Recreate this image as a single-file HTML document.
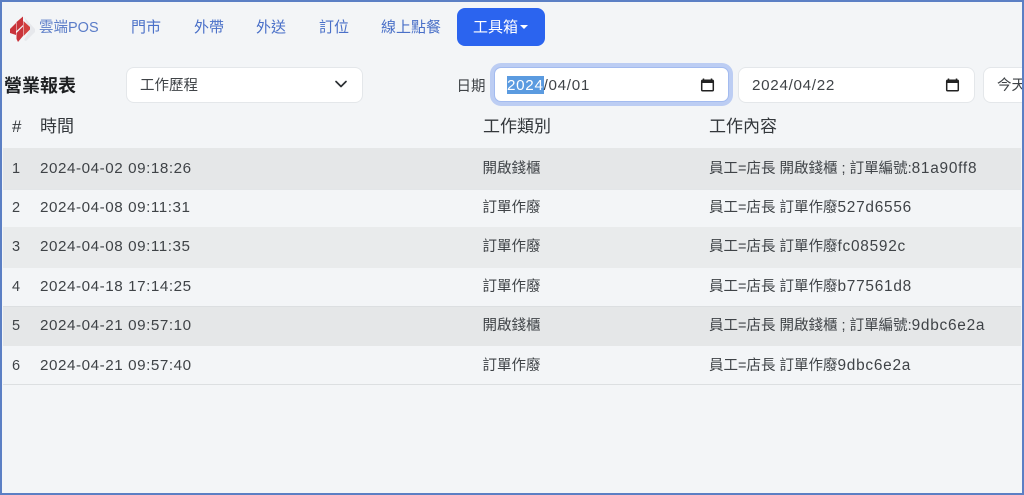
<!DOCTYPE html>
<html><head><meta charset="utf-8">
<style>
html,body{margin:0;padding:0;width:1024px;height:495px;overflow:hidden;background:#f3f5f7}
body{position:relative;font-family:"Liberation Sans","Noto Sans CJK TC",sans-serif;color:#343a40}
.t{position:absolute;white-space:nowrap;line-height:20px;height:20px}
.nav{color:#4a70c8;font-size:15px;top:18px}
.c{font-size:14.5px;color:#3f4347}
.d{font-size:15.2px;letter-spacing:.56px}
.l{font-size:15.4px;letter-spacing:.75px}
.h{font-size:17px;color:#33373b}
.row{position:absolute;left:3px;right:3px}
.box{position:absolute;background:#fff;border:1px solid #e4e7ea;border-radius:8px;box-sizing:border-box}
svg{position:absolute;display:block}
#frame{position:absolute;left:0;top:0;width:1024px;height:495px;box-sizing:border-box;border:2px solid #5b7fc4;pointer-events:none}
</style></head><body>

<svg style="left:9px;top:16px" width="28" height="27" viewBox="0 0 28 27">
<path d="M15 1 L26 13 L26 16 L17 25 L15 24 L21 14Z" fill="#e6e8ec"/>
<path d="M1 13 L7 7 L7 19 L1 17Z" fill="#c9333a"/>
<path d="M7.500 6 L14 0.500 L14 9 L7.500 15Z" fill="#c9333a"/>
<path d="M14.500 5 L21 11 L21 13.500 L14.500 20Z" fill="#d2403f"/>
<path d="M7.500 17 L14 10.500 L14 20 L9 26 L7.500 23Z" fill="#c9333a"/>
</svg>

<div class="t" style="left:39px;top:18px;font-size:14.5px;color:#5a7cc8">雲端POS</div>
<div class="t nav" style="left:131px">門市</div>
<div class="t nav" style="left:194px">外帶</div>
<div class="t nav" style="left:256px">外送</div>
<div class="t nav" style="left:319px">訂位</div>
<div class="t nav" style="left:381px">線上點餐</div>

<div style="position:absolute;left:457px;top:8px;width:88px;height:38px;background:#2b64ef;border-radius:8px"></div>
<div class="t" style="left:473px;top:18px;font-size:15px;color:#fff">工具箱</div>
<div style="position:absolute;left:520px;top:25px;width:0;height:0;border-left:4.5px solid transparent;border-right:4.5px solid transparent;border-top:4.5px solid #fff"></div>

<div class="t" style="left:4px;top:76px;font-size:18px;font-weight:bold;color:#1d1f21">營業報表</div>

<div class="box" style="left:126px;top:67px;width:237px;height:36px"></div>
<div class="t" style="left:140px;top:76px;font-size:14.5px;color:#3f4347">工作歷程</div>
<svg style="left:334px;top:79px" width="14" height="11" viewBox="0 0 14 11"><path d="M2 2.5 L7 7.5 L12 2.5" fill="none" stroke="#2b2f33" stroke-width="1.7" stroke-linecap="round" stroke-linejoin="round"/></svg>

<div class="t" style="left:456.500px;top:77px;font-size:14.5px;color:#3f4347">日期</div>

<div class="box" style="left:490px;top:63px;width:243px;height:43px;border:0;border-radius:11px;background:#bccdf3"></div>
<div class="box" style="left:494px;top:67px;width:235px;height:35px;background:#fff;border:1px solid #a3bbef;border-radius:7px"></div>
<div style="position:absolute;left:507px;top:76px;width:37px;height:18px;background:#5b9be0"></div>
<div class="t" style="left:507px;top:75.500px;font-size:15.2px;color:#3f4347;letter-spacing:.7px"><span style="color:#fff">2024</span>/04/01</div>
<svg style="left:700px;top:78px" width="15" height="14" viewBox="0 0 15 14"><path d="M3.5 .5V3M11.5 .5V3" stroke="#222" stroke-width="1.5"/><rect x="1.7" y="2.2" width="11.6" height="10.6" rx="1" fill="none" stroke="#222" stroke-width="1.5"/><rect x="1.7" y="2.2" width="11.6" height="2.8" fill="#222"/></svg>

<div class="box" style="left:738px;top:67px;width:237px;height:36px"></div>
<div class="t" style="left:752px;top:75.500px;font-size:15.2px;color:#3f4347;letter-spacing:.7px">2024/04/22</div>
<svg style="left:945px;top:78px" width="15" height="14" viewBox="0 0 15 14"><path d="M3.5 .5V3M11.5 .5V3" stroke="#222" stroke-width="1.5"/><rect x="1.7" y="2.2" width="11.6" height="10.6" rx="1" fill="none" stroke="#222" stroke-width="1.5"/><rect x="1.7" y="2.2" width="11.6" height="2.8" fill="#222"/></svg>

<div class="box" style="left:983px;top:67px;width:60px;height:36px"></div>
<div class="t" style="left:997px;top:76px;font-size:14.5px;color:#3f4347">今天</div>

<div class="t h" style="left:12px;top:117px">#</div>
<div class="t h" style="left:40px;top:117px">時間</div>
<div class="t h" style="left:483px;top:117px">工作類別</div>
<div class="t h" style="left:709px;top:117px">工作內容</div>

<div class="row" style="top:148px;height:41px;background:#e5e7e8"></div>
<div class="row" style="top:189px;height:38px;background:#f3f5f7;border-top:1px solid #e3e6e8;box-sizing:border-box"></div>
<div class="row" style="top:227px;height:41px;background:#e9ebec"></div>
<div class="row" style="top:268px;height:39px;background:#f3f5f7;border-bottom:1px solid #dcdfe1;box-sizing:border-box"></div>
<div class="row" style="top:307px;height:39px;background:#e5e7e8"></div>
<div class="row" style="top:346px;height:39px;background:#f3f5f7;border-bottom:1px solid #dcdfe1;box-sizing:border-box"></div>

<div class="t c" style="left:12px;top:159px">1</div>
<div class="t c d" style="left:40px;top:159px">2024-04-02 09:18:26</div>
<div class="t c" style="left:482.500px;top:159px">開啟錢櫃</div>
<div class="t c" style="left:709px;top:159px">員工=店長 開啟錢櫃 ; 訂單編號:<span class="l">81a90ff8</span></div>

<div class="t c" style="left:12px;top:198px">2</div>
<div class="t c d" style="left:40px;top:198px">2024-04-08 09:11:31</div>
<div class="t c" style="left:482.500px;top:198px">訂單作廢</div>
<div class="t c" style="left:709px;top:198px">員工=店長 訂單作廢<span class="l">527d6556</span></div>

<div class="t c" style="left:12px;top:237px">3</div>
<div class="t c d" style="left:40px;top:237px">2024-04-08 09:11:35</div>
<div class="t c" style="left:482.500px;top:237px">訂單作廢</div>
<div class="t c" style="left:709px;top:237px">員工=店長 訂單作廢<span class="l">fc08592c</span></div>

<div class="t c" style="left:12px;top:277px">4</div>
<div class="t c d" style="left:40px;top:277px">2024-04-18 17:14:25</div>
<div class="t c" style="left:482.500px;top:277px">訂單作廢</div>
<div class="t c" style="left:709px;top:277px">員工=店長 訂單作廢<span class="l">b77561d8</span></div>

<div class="t c" style="left:12px;top:316px">5</div>
<div class="t c d" style="left:40px;top:316px">2024-04-21 09:57:10</div>
<div class="t c" style="left:482.500px;top:316px">開啟錢櫃</div>
<div class="t c" style="left:709px;top:316px">員工=店長 開啟錢櫃 ; 訂單編號:<span class="l">9dbc6e2a</span></div>

<div class="t c" style="left:12px;top:356px">6</div>
<div class="t c d" style="left:40px;top:356px">2024-04-21 09:57:40</div>
<div class="t c" style="left:482.500px;top:356px">訂單作廢</div>
<div class="t c" style="left:709px;top:356px">員工=店長 訂單作廢<span class="l">9dbc6e2a</span></div>

<div id="frame"></div>
</body></html>
